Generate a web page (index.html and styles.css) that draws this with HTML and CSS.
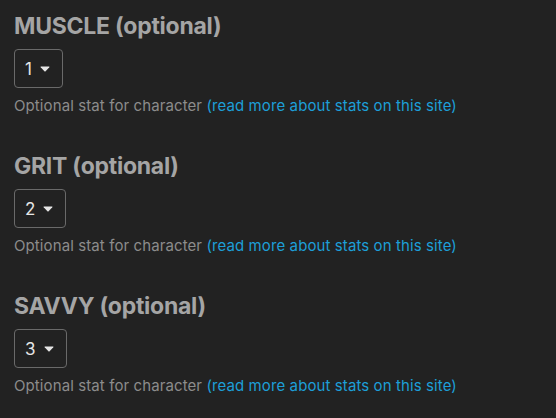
FILE: index.html
```html
<!DOCTYPE html>
<html>
<head>
<meta charset="utf-8">
<link rel="stylesheet" href="styles.css">
</head>
<body>
<div class="stats">
  <div class="stat">
    <h2 class="stat-title">MUSCLE (optional)</h2>
    <div class="picker"><span class="picker-value">1</span><svg class="caret" width="10" height="6" viewBox="0 0 10 6"><path d="M1 0.5 H9 Q9.8 0.5 9.3 1.2 L5.6 5.2 Q5 5.8 4.4 5.2 L0.7 1.2 Q0.2 0.5 1 0.5 Z" fill="#e6e6e6"/></svg></div>
    <p class="stat-help">Optional stat for character <a class="stat-link" href="#">(read more about stats on this site)</a></p>
  </div>
  <div class="stat">
    <h2 class="stat-title">GRIT (optional)</h2>
    <div class="picker"><span class="picker-value">2</span><svg class="caret" width="10" height="6" viewBox="0 0 10 6"><path d="M1 0.5 H9 Q9.8 0.5 9.3 1.2 L5.6 5.2 Q5 5.8 4.4 5.2 L0.7 1.2 Q0.2 0.5 1 0.5 Z" fill="#e6e6e6"/></svg></div>
    <p class="stat-help">Optional stat for character <a class="stat-link" href="#">(read more about stats on this site)</a></p>
  </div>
  <div class="stat">
    <h2 class="stat-title">SAVVY (optional)</h2>
    <div class="picker"><span class="picker-value">3</span><svg class="caret" width="10" height="6" viewBox="0 0 10 6"><path d="M1 0.5 H9 Q9.8 0.5 9.3 1.2 L5.6 5.2 Q5 5.8 4.4 5.2 L0.7 1.2 Q0.2 0.5 1 0.5 Z" fill="#e6e6e6"/></svg></div>
    <p class="stat-help">Optional stat for character <a class="stat-link" href="#">(read more about stats on this site)</a></p>
  </div>
</div>
</body>
</html>
```
FILE: styles.css
```css
html, body {
  margin: 0;
  padding: 0;
  background: #222222;
}
body {
  font-family: Inter, "Noto Sans", sans-serif;
  height: 418px;
  overflow: hidden;
}
.stats {
  padding: 12px 14px 0;
  display: flex;
  flex-direction: column;
  gap: 36px;
}
.stat {
  display: flex;
  flex-direction: column;
  align-items: flex-start;
}
.stat-title {
  margin: 0;
  font-size: 23px;
  line-height: 28px;
  font-weight: 700;
  letter-spacing: -0.25px;
  color: #a5a5a5;
}
.picker {
  margin-top: 9px;
  box-sizing: border-box;
  height: 39px;
  display: flex;
  align-items: center;
  gap: 8px;
  padding: 0 12px 0 10px;
  border: 1px solid #6a6a6a;
  border-radius: 4px;
}
.picker-value {
  font-size: 17px;
  line-height: 20px;
  color: #e6e6e6;
}
.caret {
  display: block;
}
.stat-help {
  margin: 8px 0 0;
  font-size: 15px;
  line-height: 20px;
  letter-spacing: 0.1px;
  color: #8c8c8c;
}
.stat-link {
  color: #1d9fd8;
  text-decoration: none;
}
```
